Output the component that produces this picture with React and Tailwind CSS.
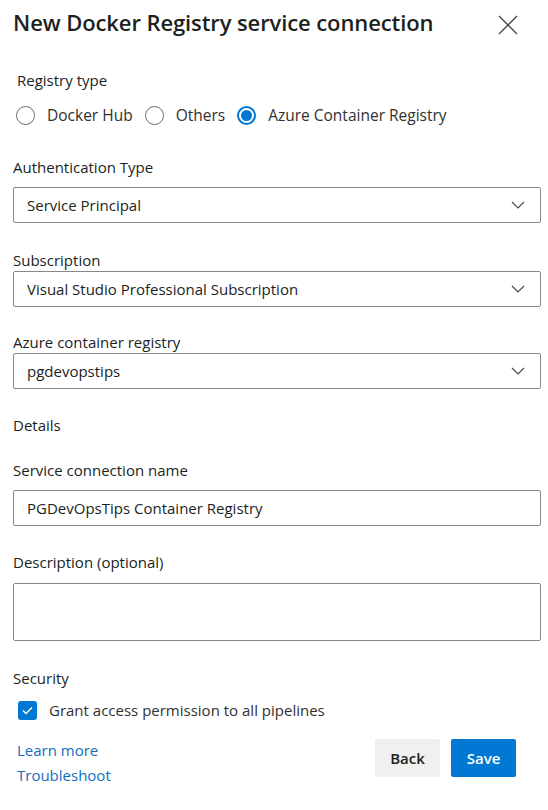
import { useState } from "react";

const font = { fontFamily: '"Open Sans", "Noto Sans", Arial, sans-serif' };

function Chevron() {
  return (
    <svg width="14" height="8" viewBox="0 0 14 8" fill="none">
      <path d="M1 1l6 6 6-6" stroke="#4b4b4b" strokeWidth="1.2" />
    </svg>
  );
}

function Radio({ label, checked, onClick }) {
  return (
    <button onClick={onClick} className="flex items-center gap-[12px] mr-[2px]">
      {checked ? (
        <span className="w-[19px] h-[19px] rounded-full border-2 border-[#0078d4] flex items-center justify-center">
          <span className="w-[11px] h-[11px] rounded-full bg-[#0078d4]" />
        </span>
      ) : (
        <span className="w-[19px] h-[19px] rounded-full border border-[#6b6b6b]" />
      )}
      <span className="text-[15.5px] text-[#323130]">{label}</span>
    </button>
  );
}

function Select({ value }) {
  return (
    <div className="h-[36px] border border-[#8a8886] rounded-[2px] flex items-center justify-between pl-[13px] pr-[15px]">
      <span className="text-[15px] text-[#201f1e]">{value}</span>
      <Chevron />
    </div>
  );
}

export default function App() {
  const [type, setType] = useState("acr");
  const [grant, setGrant] = useState(true);

  return (
    <div style={font} className="w-[548px] h-[810px] bg-white text-[#201f1e] pl-[13px] pr-[7px]">
      <div className="flex items-center justify-between pt-[6px] pr-[23px]">
        <h1 className="text-[22px] font-semibold text-[#201f1e] tracking-[-0.1px]">
          New Docker Registry service connection
        </h1>
        <svg width="20" height="20" viewBox="0 0 20 20" className="mt-[4px]">
          <path d="M1 1l18 18M19 1L1 19" stroke="#444" strokeWidth="1.3" />
        </svg>
      </div>

      <div className="mt-[30px] pl-[4px] text-[15px]">Registry type</div>
      <div className="flex items-center gap-[10px] mt-[12px] pl-[3px]">
        <Radio label="Docker Hub" checked={type === "hub"} onClick={() => setType("hub")} />
        <Radio label="Others" checked={type === "others"} onClick={() => setType("others")} />
        <Radio label="Azure Container Registry" checked={type === "acr"} onClick={() => setType("acr")} />
      </div>

      <div className="mt-[29px] text-[15px]">Authentication Type</div>
      <div className="mt-[9px]">
        <Select value="Service Principal" />
      </div>

      <div className="mt-[26px] text-[15px] leading-[22px]">Subscription</div>
      <div>
        <Select value="Visual Studio Professional Subscription" />
      </div>

      <div className="mt-[24px] text-[15px] leading-[22px]">Azure container registry</div>
      <div>
        <Select value="pgdevopstips" />
      </div>

      <div className="mt-[25px] text-[15px]">Details</div>

      <div className="mt-[22px] text-[15px]">Service connection name</div>
      <div className="mt-[9px] h-[36px] border border-[#8a8886] rounded-[2px] flex items-center pl-[13px]">
        <span className="text-[15px]">PGDevOpsTips Container Registry</span>
      </div>

      <div className="mt-[25px] text-[15px]">Description (optional)</div>
      <div className="mt-[9px] h-[58px] border border-[#8a8886] rounded-[2px]" />

      <div className="mt-[26px] text-[15px]">Security</div>
      <button onClick={() => setGrant(!grant)} className="flex items-center gap-[12px] mt-[10px] pl-[5px]">
        <span className={`w-[19px] h-[19px] rounded-[3px] flex items-center justify-center ${grant ? "bg-[#0078d4]" : "border border-[#6b6b6b]"}`}>
          {grant && (
            <svg width="11" height="9" viewBox="0 0 11 9" fill="none">
              <path d="M1 4.5l3 3 6-6" stroke="white" strokeWidth="1.4" />
            </svg>
          )}
        </span>
        <span className="text-[15px] text-[#323130]">Grant access permission to all pipelines</span>
      </button>

      <div className="flex justify-between items-start mt-[16px] pl-[4px] pr-[25px]">
        <div className="flex flex-col text-[15px] text-[#106ebe] leading-[25px]">
          <a href="#">Learn more</a>
          <a href="#">Troubleshoot</a>
        </div>
        <div className="flex gap-[11px] mt-[1px]">
          <button className="h-[38px] w-[65px] bg-[#f0f0f0] rounded-[2px] text-[15px] font-semibold text-[#201f1e]">Back</button>
          <button className="h-[38px] w-[65px] bg-[#0078d4] rounded-[2px] text-[15px] font-semibold text-white">Save</button>
        </div>
      </div>
    </div>
  );
}
